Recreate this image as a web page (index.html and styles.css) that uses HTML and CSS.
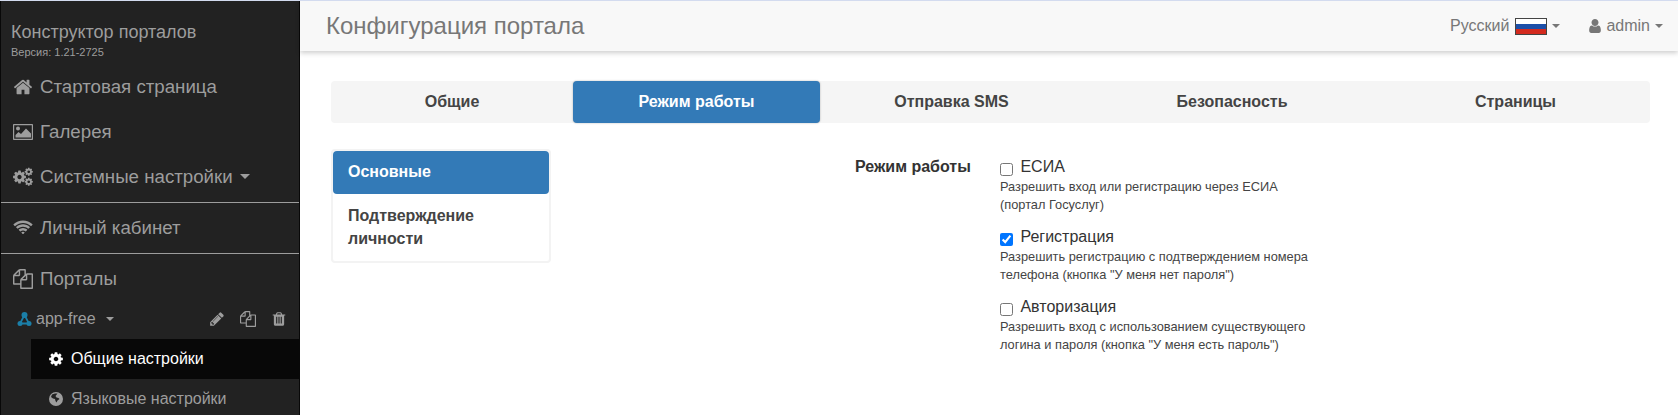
FILE: index.html
```html
<!DOCTYPE html>
<html lang="ru">
<head>
    <meta charset="UTF-8">
    <title>Конфигурация портала</title>
    <link rel="stylesheet" href="styles.css">
</head>
<body>
    <svg class="sprite" width="0" height="0">
        <symbol id="i-cog" viewBox="0 0 1792 1792"><path d="M1152 896q0-106-75-181t-181-75-181 75-75 181 75 181 181 75 181-75 75-181zm512-109v222q0 12-8 23t-20 13l-185 28q-19 54-39 91 35 50 107 138 10 12 10 25t-9 23q-27 37-99 108t-94 71q-12 0-26-9l-138-108q-44 23-91 38-16 136-29 186-7 28-36 28h-222q-14 0-24.500-8.500t-11.500-21.500l-28-184q-49-16-90-37l-141 107q-10 9-25 9-14 0-25-11-126-114-165-168-7-10-7-23 0-12 8-23 15-21 51-66.500t54-70.500q-27-50-41-99l-183-27q-13-2-21-12.500t-8-23.500v-222q0-12 8-23t19-13l186-28q14-46 39-92-40-57-107-138-10-12-10-24 0-10 9-23 26-36 98.500-107.500t94.500-71.500q13 0 26 10l138 107q44-23 91-38 16-136 29-186 7-28 36-28h222q14 0 24.500 8.500t11.500 21.500l28 184q49 16 90 37l142-107q9-9 24-9 13 0 25 10 129 119 165 170 7 8 7 22 0 12-8 23-15 21-51 66.500t-54 70.500q26 50 41 98l183 28q13 2 21 12.500t8 23.500z"/></symbol>
        <symbol id="i-files" viewBox="0 0 1792 1792"><path d="M1696 384q40 0 68 28t28 68v1216q0 40-28 68t-68 28h-960q-40 0-68-28t-28-68v-288h-544q-40 0-68-28t-28-68v-672q0-40 20-88t48-76l408-408q28-28 76-48t88-20h416q40 0 68 28t28 68v328q68-40 128-40h416zm-544 213l-299 299h299v-299zm-640-384l-299 299h299v-299zm196 647l316-316v-416h-384v416q0 40-28 68t-68 28h-416v640h512v-256q0-40 20-88t48-76zm956 804v-1152h-384v416q0 40-28 68t-68 28h-416v640h896z"/></symbol>
    </svg>

    <div class="app">
        <aside class="sidebar">
            <div class="brand">
                <div class="brand-name">Конструктор порталов</div>
                <div class="brand-version">Версия: 1.21-2725</div>
            </div>
            <nav class="side-nav">
                <a class="side-item">
                    <svg class="side-icon" viewBox="0 0 1792 1792"><path d="M1472 992v480q0 26-19 45t-45 19h-384v-384h-256v384h-384q-26 0-45-19t-19-45v-480q0-1 .5-3t.5-3l575-474 575 474q1 2 1 6zm223-69l-62 74q-8 9-21 11h-3q-13 0-21-7l-692-577-692 577q-12 8-24 7-13-2-21-11l-62-74q-8-10-7-23.500t11-21.500l719-599q32-26 76-26t76 26l244 204v-195q0-14 9-23t23-9h192q14 0 23 9t9 23v408l219 182q10 8 11 21.500t-7 23.500z"/></svg>
                    <span>Стартовая страница</span>
                </a>
                <a class="side-item">
                    <svg class="side-icon" viewBox="0 0 20 20"><path fill-rule="evenodd" d="M.8 2h18.400a.8.8 0 0 1 .8.8v14.400a.8.8 0 0 1-.8.8H.8a.8.8 0 0 1-.8-.8V2.800A.8.8 0 0 1 .8 2zm.4 1.200v13.600h17.600V3.200z"/><circle cx="5" cy="6.500" r="2"/><path d="M2.500 15.500v-2.500l3-3 2.500 2 5-5.500 5 5v4z"/></svg>
                    <span>Галерея</span>
                </a>
                <a class="side-item">
                    <svg class="side-icon" viewBox="0 0 20 20"><use href="#i-cog" x="-1" y="2.500" width="15" height="15"/><use href="#i-cog" x="11" y="0" width="9.500" height="9.500"/><use href="#i-cog" x="11" y="10" width="9.500" height="9.500"/></svg>
                    <span>Системные настройки</span>
                    <span class="caret caret-big"></span>
                </a>
                <hr class="side-line">
                <a class="side-item">
                    <svg class="side-icon" viewBox="0 0 2048 1792"><path d="M1024 1523q-20 0-93-73.500t-73-93.500q0-32 62.500-54t103.500-22 103.500 22 62.500 54q0 20-73 93.500t-93 73.500zm270-271q-2 0-40-25t-101.500-50-128.500-25-128.500 25-101 50-40.500 25q-18 0-93.500-75t-75.500-93q0-13 10-23 78-77 196-121t233-44 233 44 196 121q10 10 10 23 0 18-75.500 93t-93.500 75zm273-272q-11 0-23-8-136-105-252-154.500t-268-49.500q-85 0-170.500 22t-149 53-113.500 62-79 53-31 22q-17 0-92-75t-75-93q0-12 10-22 132-132 320-205t380-73 380 73 320 205q10 10 10 22 0 18-75 93t-92 75zm271-271q-11 0-22-9-179-157-371.500-236.500t-420.500-79.500-420.500 79.500-371.500 236.500q-11 9-22 9-17 0-92.500-75t-75.500-93q0-13 10-23 187-186 445-288t527-102 527 102 445 288q10 10 10 23 0 18-75.500 93t-92.500 75z"/></svg>
                    <span>Личный кабинет</span>
                </a>
                <hr class="side-line">
                <a class="side-item">
                    <svg class="side-icon"><use href="#i-files"/></svg>
                    <span>Порталы</span>
                </a>
                <div class="portal-row">
                    <svg class="portal-icon" viewBox="0 0 14 14"><path d="M7 3 2.500 11.500h9z" fill="none" stroke="#1b7fa8" stroke-width="1.800"/><circle cx="7" cy="3" r="3"/><circle cx="2.500" cy="11.500" r="2.500"/><circle cx="11.500" cy="11.500" r="2.500"/></svg>
                    <span class="portal-name">app-free</span>
                    <span class="caret"></span>
                    <span class="portal-tools">
                        <svg class="tool-icon" viewBox="0 0 1792 1792"><path d="M491 1536l91-91-235-235-91 91v107h128v128h107zm523-928q0-22-22-22-10 0-17 7l-542 542q-7 7-7 17 0 22 22 22 10 0 17-7l542-542q7-7 7-17zm-54-192l416 416-832 832h-416v-416zm683 96q0 53-37 90l-166 166-416-416 166-165q36-38 90-38 53 0 91 38l235 234q37 39 37 91z"/></svg>
                        <svg class="tool-icon"><use href="#i-files"/></svg>
                        <svg class="tool-icon" viewBox="0 0 1792 1792"><path d="M704 1376v-704q0-14-9-23t-23-9h-64q-14 0-23 9t-9 23v704q0 14 9 23t23 9h64q14 0 23-9t9-23zm256 0v-704q0-14-9-23t-23-9h-64q-14 0-23 9t-9 23v704q0 14 9 23t23 9h64q14 0 23-9t9-23zm256 0v-704q0-14-9-23t-23-9h-64q-14 0-23 9t-9 23v704q0 14 9 23t23 9h64q14 0 23-9t9-23zm-544-992h448l-48-117q-7-9-17-11h-317q-10 2-17 11zm928 32v64q0 14-9 23t-23 9h-96v948q0 83-47 143.500t-113 60.500h-832q-66 0-113-58.500t-47-141.500v-952h-96q-14 0-23-9t-9-23v-64q0-14 9-23t23-9h309l70-167q15-37 54-63t79-26h320q40 0 79 26t54 63l70 167h309q14 0 23 9t9 23z"/></svg>
                    </span>
                </div>
                <a class="sub-item sub-item-active">
                    <svg class="sub-icon"><use href="#i-cog"/></svg>
                    <span>Общие настройки</span>
                </a>
                <a class="sub-item">
                    <svg class="sub-icon" viewBox="0 0 16 16"><path fill-rule="evenodd" d="M8 1a7 7 0 1 1 0 14A7 7 0 0 1 8 1zM4 3.500 3 6l2 1.500 2 .5.500 2 1 1.500 1-2 2-1.500-1-1-2-.5-1-1.500L9.500 2.500 7 2.500z"/></svg>
                    <span>Языковые настройки</span>
                </a>
            </nav>
        </aside>

        <div class="main">
            <header class="topbar">
                <h1 class="page-title">Конфигурация портала</h1>
                <div class="top-menu">
                    <span class="top-link">
                        <span>Русский</span>
                        <svg class="flag" viewBox="0 0 32 17"><rect width="32" height="17" fill="#444"/><rect x="1" y="1" width="30" height="5" fill="#fff"/><rect x="1" y="6" width="30" height="5" fill="#1c4fa8"/><rect x="1" y="11" width="30" height="5" fill="#d32a1e"/></svg>
                        <span class="caret caret-top"></span>
                    </span>
                    <span class="top-link">
                        <svg class="user-icon" viewBox="256 128 1280 1536"><path d="M1536 1399q0 109-62.500 187t-150.500 78h-854q-88 0-150.500-78t-62.500-187q0-85 8.500-160.500t31.500-152 58.500-131 94-89 134.500-34.500q131 128 313 128t313-128q76 0 134.500 34.500t94 89 58.500 131 31.500 152 8.500 160.500zm-256-887q0 159-112.500 271.500t-271.500 112.500-271.500-112.500-112.500-271.500 112.500-271.500 271.500-112.500 271.500 112.500 112.500 271.500z"/></svg>
                        <span>admin</span>
                        <span class="caret caret-top"></span>
                    </span>
                </div>
            </header>

            <div class="content">
                <div class="tabs">
                    <a class="tab">Общие</a>
                    <a class="tab tab-active">Режим работы</a>
                    <a class="tab">Отправка SMS</a>
                    <a class="tab">Безопасность</a>
                    <a class="tab">Страницы</a>
                </div>

                <div class="settings">
                    <div class="pills">
                        <a class="pill pill-active">Основные</a>
                        <a class="pill">Подтверждение личности</a>
                    </div>
                    <div class="mode-form">
                        <div class="mode-label">Режим работы</div>
                        <div class="mode-options">
                            <div class="option">
                                <label class="option-title"><input type="checkbox"> ЕСИА</label>
                                <p class="option-help">Разрешить вход или регистрацию через ЕСИА (портал Госуслуг)</p>
                            </div>
                            <div class="option">
                                <label class="option-title"><input type="checkbox" checked> Регистрация</label>
                                <p class="option-help">Разрешить регистрацию с подтверждением номера телефона (кнопка "У меня нет пароля")</p>
                            </div>
                            <div class="option">
                                <label class="option-title"><input type="checkbox"> Авторизация</label>
                                <p class="option-help">Разрешить вход с использованием существующего логина и пароля (кнопка "У меня есть пароль")</p>
                            </div>
                        </div>
                    </div>
                </div>
            </div>
        </div>
    </div>
</body>
</html>
```

FILE: styles.css
```css
html, body {
    height: 415px;
    overflow: hidden;
}
body {
    margin: 0;
    font-family: "Liberation Sans", Arial, sans-serif;
    font-size: 14px;
    color: #333;
    background-color: #fff;
    border-top: 1px solid #d3dbef;
    box-sizing: border-box;
}
.sprite {
    position: absolute;
}
.app {
    display: flex;
    height: 414px;
}

/* sidebar */
.sidebar {
    width: 300px;
    box-sizing: border-box;
    flex-shrink: 0;
    background-color: #222;
    border-left: 1px solid #080808;
    border-right: 1px solid #080808;
    color: #9d9d9d;
    overflow: hidden;
}
.brand {
    padding: 21px 0 0 10px;
    height: 64px;
    box-sizing: border-box;
}
.brand-name {
    font-size: 18px;
    line-height: 20px;
}
.brand-version {
    font-size: 11px;
    line-height: 12px;
    margin-top: 4px;
}
.side-item {
    display: flex;
    align-items: center;
    gap: 7px;
    height: 45px;
    box-sizing: border-box;
    padding: 0 0 2px 12px;
    font-size: 18.700px;
    white-space: nowrap;
}
.side-icon {
    width: 20px;
    height: 20px;
    fill: #9d9d9d;
    flex-shrink: 0;
}
.side-line {
    margin: 2px 0 3px;
    border: 0;
    border-top: 1px solid #9d9d9d;
}
.caret {
    display: inline-block;
    width: 0;
    height: 0;
    border-top: 4px solid;
    border-right: 4px solid transparent;
    border-left: 4px solid transparent;
}
.caret-big {
    border-top-width: 5px;
    border-right-width: 5px;
    border-left-width: 5px;
}
.caret-top {
    margin-left: -1px;
}
.portal-row {
    display: flex;
    align-items: center;
    height: 34px;
    margin-bottom: 3px;
    padding-left: 16px;
    font-size: 16px;
}
.portal-icon {
    width: 15px;
    height: 14px;
    fill: #1b7fa8;
    margin-right: 4px;
}
.portal-row .caret {
    margin-left: 10px;
}
.portal-tools {
    display: flex;
    gap: 15px;
    margin-left: auto;
    margin-right: 12px;
}
.tool-icon {
    width: 16px;
    height: 16px;
    fill: #9d9d9d;
}
.sub-item {
    display: flex;
    align-items: center;
    gap: 6px;
    height: 40px;
    margin-left: 30px;
    padding-left: 17px;
    font-size: 16px;
}
.sub-item-active {
    background-color: #080808;
    color: #fff;
}
.sub-icon {
    width: 16px;
    height: 16px;
    margin-right: 1px;
    fill: currentColor;
}

/* top bar */
.main {
    flex: 1;
    min-width: 0;
}
.topbar {
    display: flex;
    justify-content: space-between;
    align-items: center;
    height: 50px;
    padding: 0 15px 0 26px;
    background-color: #f8f8f8;
    box-shadow: 0 2px 5px rgba(0, 0, 0, 0.2);
}
.page-title {
    margin: 0;
    font-size: 24px;
    font-weight: 400;
    color: #777;
}
.top-menu {
    display: flex;
    gap: 29px;
    font-size: 16px;
    color: #777;
}
.top-link {
    display: flex;
    align-items: center;
    gap: 6px;
}
.flag {
    width: 32px;
    height: 17px;
}
.user-icon {
    width: 12px;
    height: 14px;
    margin-right: -1px;
    fill: #777;
}

/* content */
.content {
    padding: 30px 28px 0 31px;
}
.tabs {
    display: grid;
    grid-template-columns: 242px 247px 263px 298px 269px;
    height: 42px;
    background-color: #f5f5f5;
    border-radius: 4px;
}
.tab {
    display: flex;
    align-items: center;
    justify-content: center;
    font-size: 16px;
    font-weight: 700;
    color: #444;
    border-radius: 4px;
}
.tab-active {
    background-color: #337ab7;
    color: #fff;
    box-shadow: 0 0 2px rgba(0, 0, 0, 0.3);
}
.settings {
    display: flex;
    margin-top: 26px;
}
.pills {
    width: 220px;
    box-sizing: border-box;
    align-self: flex-start;
    border: 2px solid #f3f3f3;
    border-radius: 4px;
}
.pill {
    display: block;
    padding: 10px 15px;
    font-size: 16px;
    font-weight: 700;
    line-height: 22.860px;
    color: #444;
}
.pill + .pill {
    margin-top: 1px;
}
.pill-active {
    background-color: #337ab7;
    color: #fff;
    border-radius: 4px;
}
.mode-form {
    display: flex;
    margin-left: 304px;
}
.mode-label {
    width: 115px;
    font-size: 16px;
    font-weight: 700;
    line-height: 20px;
    padding-top: 8px;
    text-align: right;
    white-space: nowrap;
}
.mode-options {
    width: 316px;
    margin-left: 30px;
    padding-top: 8px;
}
.option {
    height: 70px;
}
.option-title {
    display: block;
    height: 20px;
    font-size: 16px;
    line-height: 20px;
}
.option-title input {
    margin: 0 3px 0 0;
    vertical-align: -4px;
}
.option-help {
    margin: 1px 0 0;
    font-size: 12.800px;
    line-height: 18px;
    color: #444;
}
```
